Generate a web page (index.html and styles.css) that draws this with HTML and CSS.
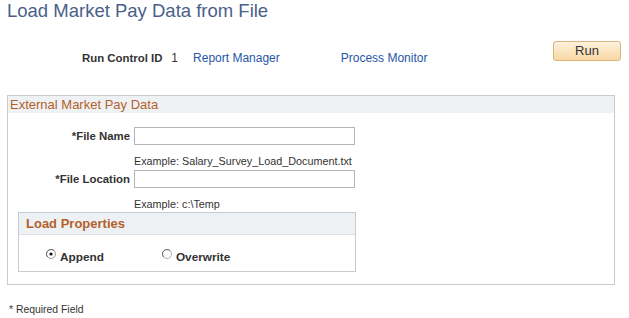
FILE: index.html
```html
<!DOCTYPE html>
<html>
<head>
<meta charset="utf-8">
<title>Load Market Pay Data from File</title>
<link rel="stylesheet" href="styles.css">
</head>
<body>
<h1 class="title">Load Market Pay Data from File</h1>
<div class="toolbar">
  <span class="rc-label">Run Control ID</span>
  <span class="rc-value">1</span>
  <a class="link link-report" href="#">Report Manager</a>
  <a class="link link-process" href="#">Process Monitor</a>
  <button class="run-btn" type="button">Run</button>
</div>
<div class="box">
  <div class="box-header">External Market Pay Data</div>
  <div class="fields">
    <div class="row">
      <label class="field-label">*File Name</label>
      <input class="field-input" type="text">
    </div>
    <div class="example">Example: Salary_Survey_Load_Document.txt</div>
    <div class="row row-second">
      <label class="field-label">*File Location</label>
      <input class="field-input" type="text">
    </div>
    <div class="example">Example: c:\Temp</div>
    <div class="subbox">
      <div class="subbox-header">Load Properties</div>
      <div class="radio-row">
        <span class="radio-item radio-append">
          <svg class="radio" width="10" height="10" viewBox="0 0 10 10">
            <circle cx="5" cy="5" r="4.5" fill="#ffffff" stroke="#9a9a9a" stroke-width="1"/>
            <path d="M1.8 8.2 A4.5 4.5 0 0 1 8.2 1.8" fill="none" stroke="#6b6b6b" stroke-width="1"/>
            <circle cx="5" cy="5" r="1.6" fill="#111111"/>
          </svg>
          <span class="radio-text">Append</span>
        </span>
        <span class="radio-item radio-overwrite">
          <svg class="radio" width="10" height="10" viewBox="0 0 10 10">
            <circle cx="5" cy="5" r="4.5" fill="#ffffff" stroke="#b4b4b4" stroke-width="1"/>
            <path d="M1.8 8.2 A4.5 4.5 0 0 1 8.2 1.8" fill="none" stroke="#6b6b6b" stroke-width="1"/>
          </svg>
          <span class="radio-text">Overwrite</span>
        </span>
      </div>
    </div>
  </div>
</div>
<div class="required">* Required Field</div>
</body>
</html>
```
FILE: styles.css
```css
body {
  margin: 0;
  font-family: "Liberation Sans", Arial, sans-serif;
  color: #333333;
  background: #ffffff;
}

.title {
  margin: 0;
  padding: 0 0 0 7px;
  font-size: 18.5px;
  font-weight: normal;
  line-height: 22px;
  color: #4a5f8a;
}

.toolbar {
  display: flex;
  align-items: flex-start;
  margin-top: 19px;
  padding: 0 8px 0 82px;
  height: 24px;
}

.rc-label,
.rc-value,
.link {
  margin-top: 10px;
  line-height: 14px;
}

.rc-label {
  font-size: 11.4px;
  font-weight: bold;
  color: #333333;
}

.rc-value {
  margin-left: 9px;
  font-size: 12px;
  color: #333333;
}

.link {
  font-size: 12px;
  color: #2656a6;
  text-decoration: none;
}

.link-report {
  margin-left: 15px;
}

.link-process {
  margin-left: 61px;
}

.run-btn {
  margin-left: auto;
  width: 68px;
  height: 20px;
  padding: 0;
  border: 1px solid #dcb37e;
  border-radius: 3px;
  background: linear-gradient(#fdf1dd, #f8d8a4);
  font-family: "Liberation Sans", Arial, sans-serif;
  font-size: 13px;
  color: #333333;
  line-height: 18px;
}

.box {
  margin: 30px 0 0 7px;
  width: 606px;
  border: 1px solid #cacaca;
  padding-bottom: 12px;
}

.box-header {
  height: 17px;
  padding-left: 2px;
  background: #eff2f4;
  font-size: 13px;
  line-height: 17px;
  color: #b3612c;
}

.fields {
  padding-top: 14px;
}

.row {
  display: flex;
  align-items: center;
}

.row-second {
  margin-top: 2px;
}

.field-label {
  width: 122px;
  text-align: right;
  font-size: 11.4px;
  font-weight: bold;
  color: #333333;
}

.field-input {
  margin: 0 0 0 4px;
  width: 221px;
  height: 18px;
  box-sizing: border-box;
  border: 1px solid #b6b6b6;
  padding: 0 2px;
  background: #ffffff;
}

.example {
  margin-top: 10px;
  padding-left: 126px;
  font-size: 10.8px;
  line-height: 13px;
  color: #333333;
}

.subbox {
  margin: 1px 0 0 10px;
  width: 336px;
  border: 1px solid #c8ccd0;
}

.subbox-header {
  padding: 1px 0 0 7px;
  height: 20px;
  line-height: 19px;
  background: #eef1f3;
  border-bottom: 1px solid #dde1e4;
  font-size: 13px;
  font-weight: bold;
  color: #b3612c;
}

.radio-row {
  display: flex;
  align-items: flex-start;
  padding: 15px 0 7px 27px;
}

.radio-item {
  display: flex;
  align-items: flex-start;
}

.radio-overwrite {
  margin-left: 58px;
}

.radio {
  display: block;
  margin-top: -1px;
  margin-right: 4px;
}

.radio-text {
  font-size: 11.8px;
  font-weight: bold;
  line-height: 14px;
  color: #333333;
}

.required {
  margin-top: 19px;
  padding-left: 9px;
  font-size: 10.4px;
  line-height: 12px;
  color: #333333;
}
```
